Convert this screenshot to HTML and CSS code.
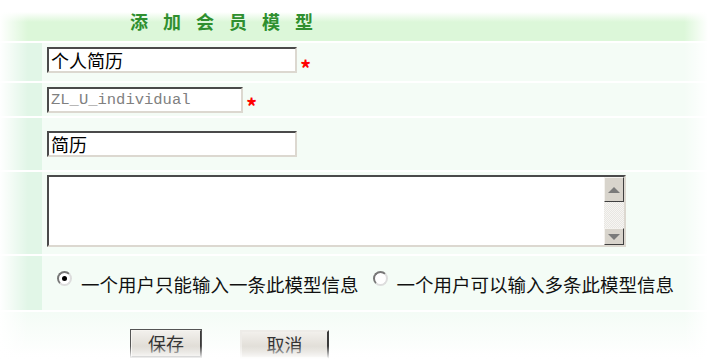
FILE: index.html
```html
<!DOCTYPE html>
<html lang="zh-CN">
<head>
  <meta charset="UTF-8" />
  <title>添加会员模型</title>
  <link rel="stylesheet" href="styles.css">
</head>
<body>
  <div class="page">
    <div class="head">
      <h2>添加会员模型</h2>
    </div>

    <div class="row row-name">
      <div class="side"></div>
      <div class="field">
        <input type="text" class="text wide" value="个人简历" />
        <span class="req">*</span>
      </div>
    </div>

    <div class="row row-table">
      <div class="side"></div>
      <div class="field">
        <input type="text" class="text short mono" value="ZL_U_individual" readonly />
        <span class="req">*</span>
      </div>
    </div>

    <div class="row row-tag">
      <div class="side"></div>
      <div class="field">
        <input type="text" class="text wide" value="简历" />
      </div>
    </div>

    <div class="row row-memo">
      <div class="side"></div>
      <div class="field">
        <div class="memo">
          <textarea></textarea>
          <div class="scroll">
            <span class="arrow up"></span>
            <span class="track"></span>
            <span class="arrow down"></span>
          </div>
        </div>
      </div>
    </div>

    <div class="row row-mode">
      <div class="side"></div>
      <div class="field">
        <label class="opt"><span class="radio checked"></span>一个用户只能输入一条此模型信息</label>
        <label class="opt"><span class="radio"></span>一个用户可以输入多条此模型信息</label>
      </div>
    </div>

    <div class="actions">
      <button type="submit" class="btn save">保存</button>
      <button type="button" class="btn cancel">取消</button>
    </div>
  </div>
</body>
</html>
```

FILE: styles.css
```css
body {
  margin: 0;
  background: #fff;
  font-family: "Noto Sans CJK SC", "DejaVu Sans", sans-serif;
}
.page {
  position: relative;
  width: 715px;
  height: 359px;
  display: flex;
  flex-direction: column;
  gap: 2px;
  overflow: hidden;
}
/* soft white fade round the edges */
.page::after {
  content: "";
  position: absolute;
  inset: 0;
  pointer-events: none;
  background:
    linear-gradient(to right, #fff 0, rgba(255,255,255,0) 28px, rgba(255,255,255,0) 684px, #fff 708px),
    linear-gradient(to bottom, rgba(255,255,255,0) 346px, #fff 359px);
}
.head {
  height: 41px;
  flex: none;
  background: linear-gradient(to bottom, #fff 0, #fff 12px, #dcf7d9 22px, #dcf7d9 100%);
}
h2 {
  margin: 0;
  padding: 11px 0 0 130px;
  font-size: 18px;
  line-height: 20px;
  letter-spacing: 15px;
  color: #2f8f2f;
  font-weight: bold;
}
.row {
  display: flex;
  flex: none;
}
.side {
  width: 42px;
  flex: none;
  background: #e1f6e7;
}
.field {
  flex: 1;
  background: #f4fcf6;
  display: flex;
  align-items: center;
  padding-left: 5px;
}
.row-name { height: 38px; }
.row-table { height: 33px; }
.row-tag { height: 52px; }
.row-memo { height: 82px; }
.row-mode { height: 54px; }

.text {
  box-sizing: border-box;
  height: 26px;
  margin: 0;
  padding: 0 2px;
  border: 2px solid;
  border-color: #4a4a4a #dcd8d0 #dcd8d0 #4a4a4a;
  background: #fff;
  font-family: "Noto Sans CJK SC", "DejaVu Sans", sans-serif;
  font-size: 18px;
  color: #000;
  outline: none;
}
.row-name .text { margin-top: -4px; }
.wide { width: 250px; }
.short { width: 196px; }
.mono {
  font-family: "Liberation Mono", monospace;
  font-size: 15.5px;
  color: #808080;
}
.req {
  color: #f00;
  font-size: 22px;
  font-weight: bold;
  margin-left: 3px;
  margin-top: 10px;
}
.memo {
  box-sizing: border-box;
  width: 579px;
  height: 72px;
  margin-top: -4px;
  display: flex;
  border: 2px solid;
  border-color: #4a4a4a #dcd8d0 #dcd8d0 #4a4a4a;
  background: #fff;
}
.memo textarea {
  flex: 1;
  border: none;
  resize: none;
  outline: none;
  overflow: hidden;
}
.scroll {
  width: 20px;
  display: flex;
  flex-direction: column;
}
.arrow {
  box-sizing: border-box;
  height: 25px;
  background: #d8d4cc;
  border: 1px solid;
  border-color: #f4f2ee #404040 #404040 #f4f2ee;
  display: flex;
  align-items: center;
  justify-content: center;
}
.arrow::before {
  content: "";
  border-left: 6px solid transparent;
  border-right: 6px solid transparent;
}
.up::before { border-bottom: 6px solid #7a7a7a; }
.down::before { border-top: 6px solid #7a7a7a; }
.down { height: 17px; }
.track {
  flex: 1;
  background: repeating-conic-gradient(#e8e6e2 0 25%, #f6f5f2 0 50%) 0 0 / 2px 2px;
}
.row-mode .field {
  align-items: flex-start;
  padding-top: 14px;
  padding-left: 15px;
}
.opt {
  display: flex;
  align-items: flex-start;
  font-size: 18.5px;
  line-height: 28px;
  color: #111;
  margin-right: 14px;
}
.radio {
  width: 11px;
  height: 11px;
  border-radius: 50%;
  border: 2px solid #777;
  border-right-color: #ddd;
  border-bottom-color: #ddd;
  background: #fff;
  margin: 1px 9px 0 0;
  position: relative;
}
.radio.checked::after {
  content: "";
  position: absolute;
  left: 3px;
  top: 3px;
  width: 5px;
  height: 5px;
  border-radius: 50%;
  background: #000;
}
.actions {
  flex: 1;
  display: flex;
  align-items: flex-start;
  gap: 38px;
  padding: 17px 0 0 130px;
  background: linear-gradient(to bottom, #f4fcf6, #fff);
}
.btn {
  box-sizing: border-box;
  height: 29px;
  border: 2px solid;
  border-color: #f6f4f0 #3a3a3a #3a3a3a #f6f4f0;
  background: linear-gradient(to bottom, #f2f0ec, #d6d2ca);
  font-family: "Noto Sans CJK SC", "DejaVu Sans", sans-serif;
  font-size: 18px;
  line-height: 23px;
  color: #333;
  cursor: pointer;
  padding: 0;
}
.save {
  width: 72px;
  outline: 1px solid #555;
  outline-offset: -1px;
}
.cancel {
  width: 89px;
  margin-top: 1px;
  border-color: #eeece8 #3a3a3a #eeece8 #eeece8;
}
```
